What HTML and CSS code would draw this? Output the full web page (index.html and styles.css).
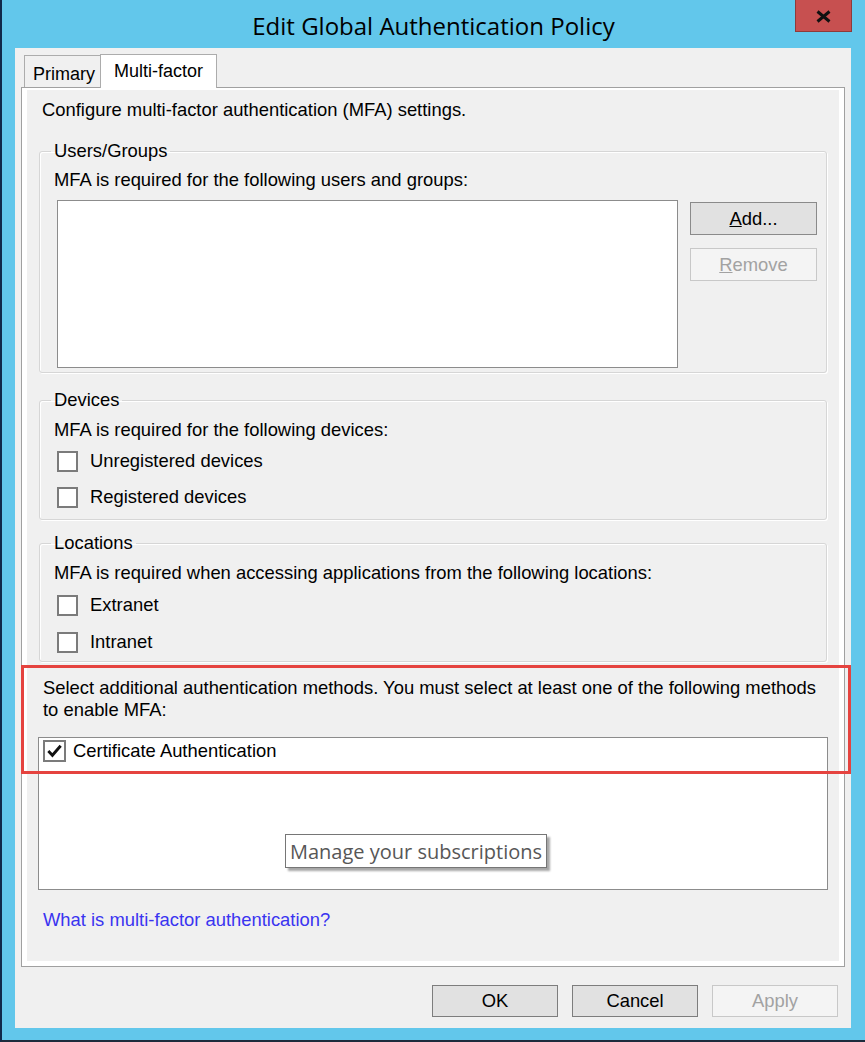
FILE: index.html
```html
<!DOCTYPE html>
<html lang="en">
<head>
<meta charset="utf-8">
<title>Edit Global Authentication Policy</title>
<link rel="stylesheet" href="styles.css">
</head>
<body>
<div class="window">
  <div class="titlebar">
    <span class="spacer"></span>
    <div class="title">Edit Global Authentication Policy</div>
    <div class="close">
      <svg width="15" height="13" viewBox="0 0 15 13"><path d="M1.5 1.5 L13.5 11.5 M13.5 1.5 L1.5 11.5" stroke="#111" stroke-width="3" fill="none"/></svg>
    </div>
  </div>
  <div class="client">
    <div class="tabs">
      <div class="tab">Primary</div>
      <div class="tab active">Multi-factor</div>
    </div>
    <div class="panel">
      <div class="page">
        <p class="intro">Configure multi-factor authentication (MFA) settings.</p>

        <fieldset class="group users">
          <legend>Users/Groups</legend>
          <p class="desc">MFA is required for the following users and groups:</p>
          <div class="users-row">
            <div class="listbox users-list"></div>
            <div class="side-buttons">
              <div class="btn"><span class="ul">A</span>dd...</div>
              <div class="btn disabled"><span class="ul">R</span>emove</div>
            </div>
          </div>
        </fieldset>

        <fieldset class="group devices">
          <legend>Devices</legend>
          <p class="desc">MFA is required for the following devices:</p>
          <div class="cb-row first"><span class="cb"></span><span>Unregistered devices</span></div>
          <div class="cb-row second"><span class="cb"></span><span>Registered devices</span></div>
        </fieldset>

        <fieldset class="group locations">
          <legend>Locations</legend>
          <p class="desc">MFA is required when accessing applications from the following locations:</p>
          <div class="cb-row first"><span class="cb"></span><span>Extranet</span></div>
          <div class="cb-row second loc2"><span class="cb"></span><span>Intranet</span></div>
        </fieldset>

        <p class="methods-text">Select additional authentication methods. You must select at least one of the following methods<br>to enable MFA:</p>

        <div class="listbox methods-list">
          <div class="method-item">
            <span class="cb checked"><svg width="20" height="20" viewBox="0 0 20 20"><path d="M3.5 10 L7.8 14.5 L16.5 4.5" stroke="#111" stroke-width="3" fill="none"/></svg></span>
            <span>Certificate Authentication</span>
          </div>
          <div class="tooltip">Manage your subscriptions</div>
        </div>

        <p class="link">What is multi-factor authentication?</p>
      </div>
    </div>
    <div class="footer">
      <div class="btn wide">OK</div>
      <div class="btn wide">Cancel</div>
      <div class="btn wide disabled">Apply</div>
    </div>
  </div>
  <div class="annotation"></div>
</div>
</body>
</html>
```

FILE: styles.css
```css
html, body {
  margin: 0;
  padding: 0;
  width: 865px;
  height: 1042px;
  overflow: hidden;
  background: #62c7eb;
}

.window {
  position: relative;
  width: 865px;
  height: 1042px;
  box-sizing: border-box;
  background: #62c7eb;
  border-left: 2px solid #11294a;
  border-bottom: 2px solid #1d2b3c;
  font-family: "Liberation Sans", Arial, sans-serif;
  font-size: 18.4px;
  color: #000;
}

.titlebar {
  height: 48px;
  display: grid;
  grid-template-columns: 1fr auto 1fr;
}

.title {
  align-self: center;
  padding-top: 2px;
  font-family: "Open Sans", "Noto Sans", sans-serif;
  font-size: 24px;
  color: #000;
  white-space: nowrap;
}

.close {
  justify-self: end;
  align-self: start;
  margin-right: 13px;
  width: 57px;
  height: 32px;
  box-sizing: border-box;
  background: #c75050;
  border: 1px solid #8f3a3a;
  border-top: none;
  display: flex;
  align-items: center;
  justify-content: center;
  padding-top: 1px;
}

.client {
  margin-left: 13px;
  width: 836px;
  height: 980px;
  box-sizing: border-box;
  background: #f0f0f0;
  padding: 6px 6px 0 6px;
}

.tabs {
  height: 33px;
  margin-left: 3px;
  display: flex;
  align-items: flex-end;
  font-size: 18px;
}

.tab {
  box-sizing: border-box;
  height: 32px;
  width: 76px;
  border: 1px solid #acacac;
  border-bottom: none;
  border-right: none;
  background: #f0f0f0;
  text-align: center;
  line-height: 30px;
  padding-top: 3px;
  padding-left: 3px;
}

.tab.active {
  position: relative;
  z-index: 1;
  height: 34px;
  width: 117px;
  margin-bottom: -1px;
  background: #fff;
  border-right: 1px solid #acacac;
  padding-top: 1px;
  padding-left: 0;
}

.panel {
  box-sizing: border-box;
  width: 824px;
  height: 880px;
  border: 1px solid #a0a0a0;
  background: #fff;
  padding: 2px 5px 5px 5px;
}

.page {
  box-sizing: border-box;
  height: 871px;
  background: #f0f0f0;
  padding: 0 12px;
  display: flex;
  flex-direction: column;
}

p {
  margin: 0;
  line-height: 20px;
}

.intro {
  margin-top: 10px;
  padding-left: 3px;
}

.group {
  margin: 0;
  padding: 0;
  border: 1px solid #d6d6d6;
  border-radius: 3px;
  box-shadow: inset 1px 1px 0 #fff, 1px 1px 0 #fff;
  min-width: 0;
}

.group legend {
  margin-left: 11px;
  padding: 0 3px;
  line-height: 20px;
}

.desc {
  margin-top: 9px;
  padding-left: 14px;
}

.users {
  margin-top: 21px;
  padding-bottom: 4px;
}

.users-row {
  margin-top: 10px;
  display: flex;
}

.listbox {
  box-sizing: border-box;
  background: #fff;
  border: 1px solid #8c8c8c;
}

.users-list {
  margin-left: 17px;
  width: 621px;
  height: 168px;
}

.side-buttons {
  margin-left: 12px;
  margin-top: 2px;
  display: flex;
  flex-direction: column;
  gap: 13px;
}

.btn {
  box-sizing: border-box;
  width: 127px;
  height: 33px;
  background: #e1e1e1;
  border: 1px solid #8a8a8a;
  display: flex;
  align-items: center;
  justify-content: center;
  color: #000;
}

.btn .ul {
  text-decoration: underline;
}

.btn.disabled {
  background: #f4f4f4;
  border-color: #c8c8c8;
  color: #a2a2a2;
}

.devices {
  margin-top: 17px;
  padding-bottom: 11px;
}

.devices .desc,
.locations .desc {
  margin-top: 10px;
}

.cb-row {
  height: 22px;
  display: flex;
  align-items: center;
  gap: 12px;
  padding-left: 17px;
}

.cb-row.first {
  margin-top: 10px;
}

.cb-row.second {
  margin-top: 14px;
}

.locations .cb-row.first {
  margin-top: 11px;
}

.cb-row.loc2 {
  margin-top: 15px;
}

.cb {
  box-sizing: border-box;
  width: 21px;
  height: 21px;
  background: #fff;
  border: 2px solid #7b7b7b;
  display: flex;
  align-items: center;
  justify-content: center;
}

.locations {
  margin-top: 13px;
  padding-bottom: 8px;
}

.methods-text {
  margin-top: 15px;
  padding-left: 4px;
  line-height: 22px;
}

.methods-list {
  position: relative;
  margin-top: 16px;
  margin-left: -1px;
  width: 790px;
  height: 153px;
}

.method-item {
  display: flex;
  align-items: center;
  gap: 7px;
  padding: 2px 4px;
  height: 22px;
}

.cb.checked {
  width: 23px;
  height: 22px;
}

.tooltip {
  position: absolute;
  left: 246px;
  top: 96px;
  width: 262px;
  height: 34px;
  box-sizing: border-box;
  background: #fff;
  border: 1px solid #767676;
  box-shadow: 3px 3px 2px rgba(0, 0, 0, 0.35);
  font-family: "Open Sans", "Noto Sans", sans-serif;
  font-size: 20px;
  color: #575757;
  display: flex;
  align-items: center;
  justify-content: center;
  white-space: nowrap;
}

.link {
  margin-top: 20px;
  padding-left: 4px;
  color: #3a34f0;
}

.footer {
  margin-top: 18px;
  padding-right: 7px;
  display: flex;
  justify-content: flex-end;
  gap: 14px;
}

.btn.wide {
  width: 126px;
  height: 32px;
  border-color: #7d7d7d;
}

.btn.wide.disabled {
  border-color: #c8c8c8;
}

.annotation {
  position: absolute;
  left: 19px;
  top: 665px;
  width: 830px;
  height: 109px;
  box-sizing: border-box;
  border: 3px solid #e5433f;
  pointer-events: none;
}
```
